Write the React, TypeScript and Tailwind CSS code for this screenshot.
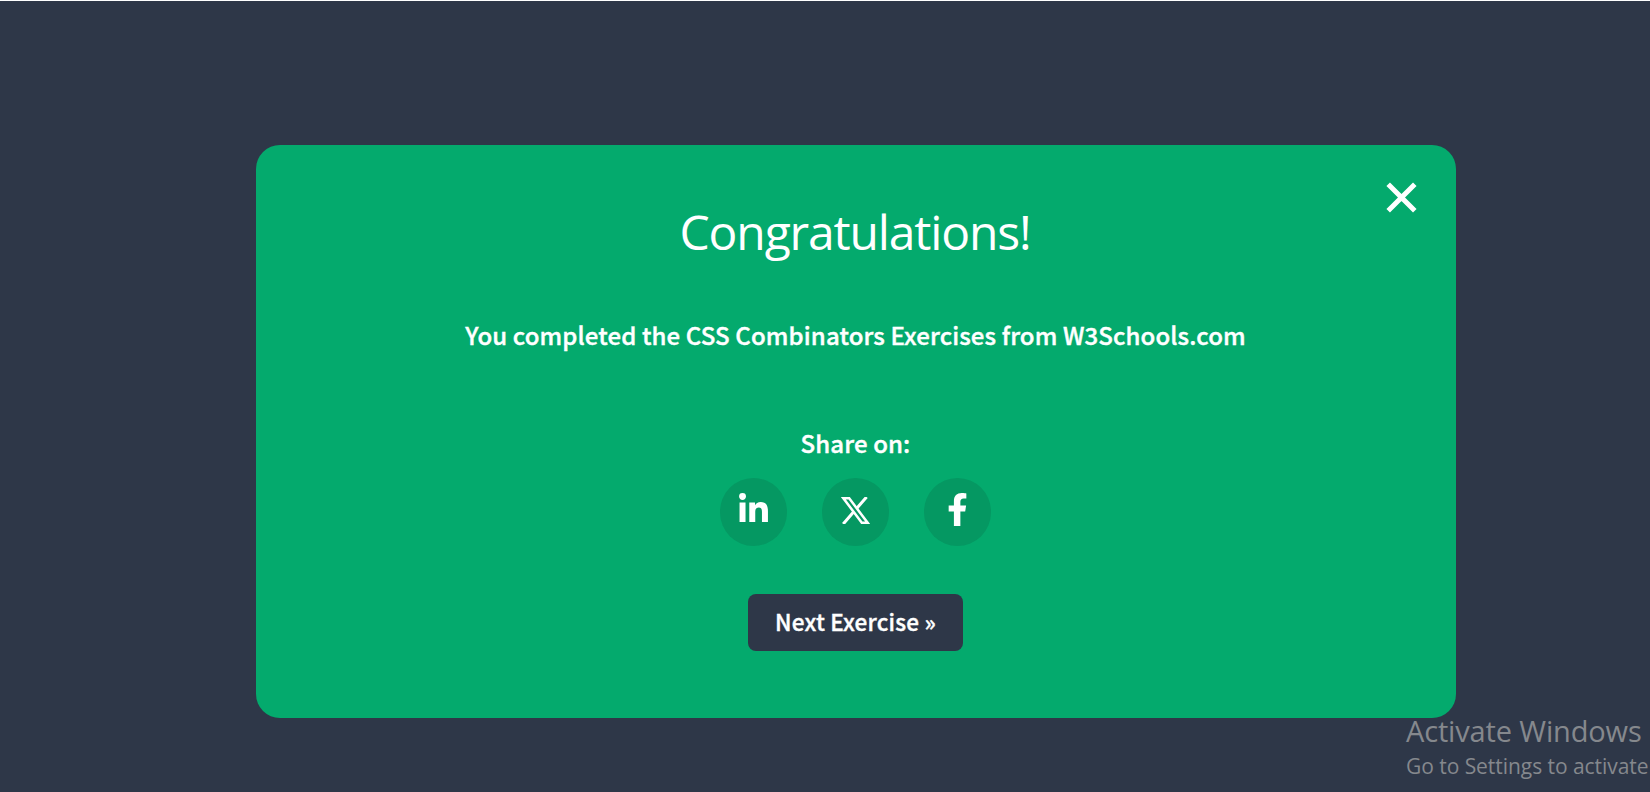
import { FaLinkedinIn, FaFacebookF } from "react-icons/fa";

const sans = "font-['Noto_Sans_CJK_SC',sans-serif] [-webkit-text-stroke:0.4px_white]";
const round = "flex h-[68px] w-[67px] items-center justify-center rounded-full bg-[#059862]";

export default function App() {
  return (
    <div className="relative h-[792px] w-[1650px] overflow-hidden border-t border-white bg-[#2e3748] pt-36 pl-64 text-white">
      <main className="relative flex h-[573px] w-[1200px] flex-col items-center rounded-3xl bg-[#04aa6d] pr-px">
        <button aria-label="Close" className="absolute top-[37px] right-[39px]">
          <svg className="block" width="31" height="31" viewBox="0 0 31 31" fill="none" stroke="white" strokeWidth="5">
            <path d="M2.2 2.2 28.8 28.8M28.8 2.2 2.2 28.8" />
          </svg>
        </button>
        <h1 className="mt-[51px] h-[72px] whitespace-nowrap pr-px font-['Open_Sans',sans-serif] text-[48px] leading-[72px] tracking-[-1.15px]">
          <span>Congratulations!</span>
        </h1>
        <p className={`mt-[49px] h-9 whitespace-nowrap text-2xl leading-9 font-medium tracking-[0.12px] ${sans}`}>
          <span>You completed the CSS Combinators Exercises from W3Schools.com</span>
        </p>
        <p className={`mt-[72px] h-9 whitespace-nowrap text-2xl leading-9 font-medium tracking-[0.12px] ${sans}`}>
          <span>Share on:</span>
        </p>
        <div className="mt-[17px] flex gap-[35px]">
          <a className={round}>
            <FaLinkedinIn className="mb-1.5 size-[33px]" />
          </a>
          <a className={round}>
            <svg className="mb-1 h-[27px] w-[29px]" viewBox="0 0 29 27" fill="none" stroke="white">
              <path strokeWidth="2.5" d="M2.4 1.25H8.2L26.6 25.75H20.8Z" />
              <path strokeWidth="3" d="M25.6 0 15.8 11.3M12.5 15 2.2 27" />
            </svg>
          </a>
          <a className={round}>
            <FaFacebookF className="mb-1.5 size-[33px]" />
          </a>
        </div>
        <button className={`mt-12 h-[57px] w-[215px] whitespace-nowrap rounded-lg bg-[#2e3748] pb-px text-[22.5px] font-medium tracking-[0.2px] ${sans}`}>
          <span>Next Exercise »</span>
        </button>
      </main>
      <aside className="absolute top-[711px] left-[1406px] whitespace-nowrap font-['Open_Sans',sans-serif] text-[#85888d]">
        <p className="text-[29px] leading-[38px] tracking-[-0.15px]">Activate Windows</p>
        <p className="mt-0.5 text-[21px] leading-7 tracking-[-0.05px]">Go to Settings to activate</p>
      </aside>
    </div>
  );
}
